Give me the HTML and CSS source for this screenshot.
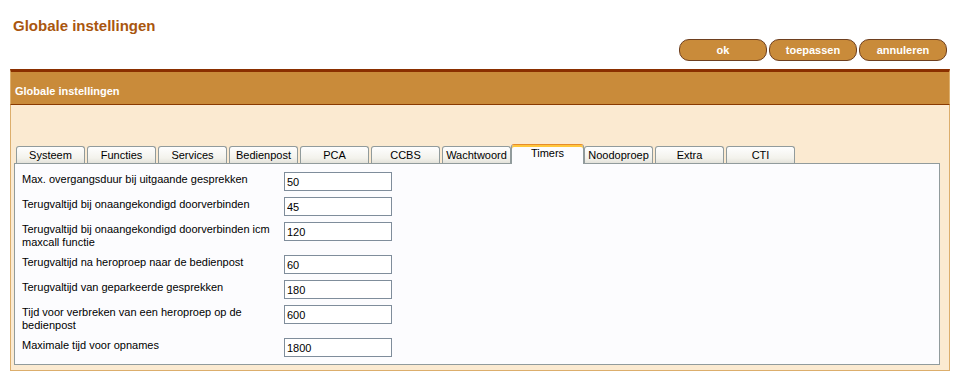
FILE: index.html
```html
<!DOCTYPE html>
<html lang="nl">
  <head>
    <meta charset="UTF-8" />
    <title>Globale instellingen</title>
    <link rel="stylesheet" href="styles.css">
  </head>
  <body>
    <h1 class="page-title">Globale instellingen</h1>

    <div class="actions">
      <button class="btn">ok</button>
      <button class="btn">toepassen</button>
      <button class="btn">annuleren</button>
    </div>

    <div class="panel">
      <div class="panel-header">Globale instellingen</div>
      <div class="panel-body">
        <ul class="tabs">
          <li class="tab">Systeem</li>
          <li class="tab">Functies</li>
          <li class="tab">Services</li>
          <li class="tab">Bedienpost</li>
          <li class="tab">PCA</li>
          <li class="tab">CCBS</li>
          <li class="tab">Wachtwoord</li>
          <li class="tab active">Timers</li>
          <li class="tab">Noodoproep</li>
          <li class="tab">Extra</li>
          <li class="tab">CTI</li>
        </ul>

        <div class="tab-content">
          <div class="field">
            <label>Max. overgangsduur bij uitgaande gesprekken</label>
            <input type="text" value="50" />
          </div>
          <div class="field">
            <label>Terugvaltijd bij onaangekondigd doorverbinden</label>
            <input type="text" value="45" />
          </div>
          <div class="field">
            <label>Terugvaltijd bij onaangekondigd doorverbinden icm maxcall functie</label>
            <input type="text" value="120" />
          </div>
          <div class="field">
            <label>Terugvaltijd na heroproep naar de bedienpost</label>
            <input type="text" value="60" />
          </div>
          <div class="field">
            <label>Terugvaltijd van geparkeerde gesprekken</label>
            <input type="text" value="180" />
          </div>
          <div class="field">
            <label>Tijd voor verbreken van een heroproep op de bedienpost</label>
            <input type="text" value="600" />
          </div>
          <div class="field">
            <label>Maximale tijd voor opnames</label>
            <input type="text" value="1800" />
          </div>
        </div>
      </div>
    </div>
  </body>
</html>
```

FILE: styles.css
```css
* {
  margin: 0;
  padding: 0;
  box-sizing: border-box;
}

body {
  font-family: "Liberation Sans", Tahoma, Arial, sans-serif;
  font-size: 11px;
  line-height: 13px;
  background: #fff;
  color: #000;
}

.page-title {
  margin: 17px 0 0 13px;
  font-size: 15px;
  line-height: 18px;
  font-weight: bold;
  color: #a9560e;
}

.actions {
  display: flex;
  justify-content: flex-end;
  gap: 2px;
  margin-top: 4px;
  padding-right: 15px;
}

.btn {
  width: 88px;
  height: 22px;
  background: #c98b3a;
  border: 1px solid #6e3f1f;
  border-radius: 10px;
  color: #fff;
  font-family: inherit;
  font-size: 11px;
  font-weight: bold;
  cursor: pointer;
}

.panel {
  margin: 8px 12px 0 10px;
}

.panel-header {
  height: 36px;
  padding: 13px 0 0 4px;
  background: #c98b3a;
  border-top: 3px solid #8a2f00;
  border-bottom: 1px solid #8a3a00;
  border-left: 1px solid #dcae6c;
  border-right: 1px solid #dcae6c;
  color: #fff;
  font-weight: bold;
}

.panel-body {
  padding: 39px 9px 5px 3px;
  background: #fbead1;
  border: 1px solid #dcae6c;
  border-top: none;
}

.tabs {
  display: flex;
  align-items: flex-end;
  list-style: none;
  padding-left: 2px;
}

.tab {
  width: 69px;
  height: 17px;
  margin-right: 2px;
  padding-top: 2px;
  text-align: center;
  border: 1px solid #919b9c;
  border-bottom: none;
  border-radius: 3px 3px 0 0;
  background: linear-gradient(#fefefe, #f3f2ec 70%, #e3e2da);
}

.tab.active {
  position: relative;
  z-index: 1;
  width: 73px;
  height: 20px;
  margin: 0 0 -1px -2px;
  border-top-color: #e68b2c;
  background: #fcfcfe;
  box-shadow: inset 0 2px 0 #ffc73c;
}

.tab-content {
  padding: 8px 7px 7px;
  background: #fcfcfe;
  border: 1px solid #919b9c;
}

.field {
  display: flex;
  align-items: flex-start;
  margin-bottom: 6px;
}

.field:last-child {
  margin-bottom: 0;
}

.field label {
  width: 262px;
  padding-top: 1px;
  padding-right: 8px;
}

.field input {
  width: 108px;
  height: 19px;
  padding: 1px 2px 0;
  border: 1px solid #7f8d9b;
  background: #fff;
  font-family: inherit;
  font-size: 11px;
  color: #000;
}
```
